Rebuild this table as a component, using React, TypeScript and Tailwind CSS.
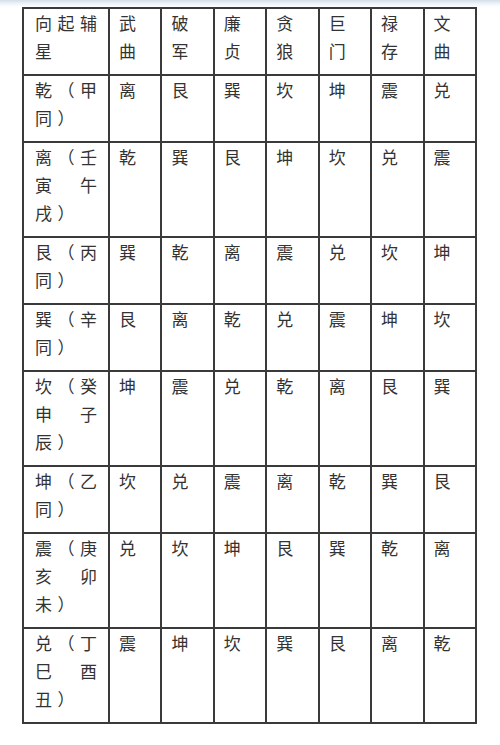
import React from 'react';

// 第一列每行分三格，空串表示该格留白
const rows: { head: string[][]; cells: string[] }[] = [
  { head: [['乾', '（', '甲'], ['同', '）', '']], cells: ['离', '艮', '巽', '坎', '坤', '震', '兑'] },
  { head: [['离', '（', '壬'], ['寅', '', '午'], ['戌', '）', '']], cells: ['乾', '巽', '艮', '坤', '坎', '兑', '震'] },
  { head: [['艮', '（', '丙'], ['同', '）', '']], cells: ['巽', '乾', '离', '震', '兑', '坎', '坤'] },
  { head: [['巽', '（', '辛'], ['同', '）', '']], cells: ['艮', '离', '乾', '兑', '震', '坤', '坎'] },
  { head: [['坎', '（', '癸'], ['申', '', '子'], ['辰', '）', '']], cells: ['坤', '震', '兑', '乾', '离', '艮', '巽'] },
  { head: [['坤', '（', '乙'], ['同', '）', '']], cells: ['坎', '兑', '震', '离', '乾', '巽', '艮'] },
  { head: [['震', '（', '庚'], ['亥', '', '卯'], ['未', '）', '']], cells: ['兑', '坎', '坤', '艮', '巽', '乾', '离'] },
  { head: [['兑', '（', '丁'], ['巳', '', '酉'], ['丑', '）', '']], cells: ['震', '坤', '坎', '巽', '艮', '离', '乾'] },
];

const stars = ['武曲', '破军', '廉贞', '贪狼', '巨门', '禄存', '文曲'];

const Lines: React.FC<{ lines: string[][] }> = ({ lines }) => (
  <div>
    {lines.map((line, i) => (
      <div key={i} className="flex justify-between h-[28px]">
        {line.map((ch, j) => (
          <span key={j} className="w-[17px]">{ch}</span>
        ))}
      </div>
    ))}
  </div>
);

const cellBase = 'border-2 border-[#3a3a3a] align-top pt-0 pb-[9px] leading-[28px]';

export default function App() {
  return (
    <div
      className="min-h-[745px] bg-white text-[17px] text-[#333]"
      style={{ fontFamily: '"Noto Sans CJK SC", "Noto Sans", sans-serif' }}
    >
      <div className="h-[7px] bg-linear-to-b from-[#d2deea] via-[#eef3f8] to-white" />
      <table className="ml-[22px] w-[455px] table-fixed border-collapse">
        <colgroup>
          <col className="w-[86px]" />
          {stars.map((s) => (
            <col key={s} />
          ))}
        </colgroup>
        <tbody>
          <tr>
            <td className={`${cellBase} pl-[11px] pr-[11px]`}>
              <Lines lines={[['向', '起', '辅'], ['星', '', '']]} />
            </td>
            {stars.map((s) => (
              <td key={s} className={`${cellBase} pl-[9px]`}>
                {s.split('').map((ch, i) => (
                  <div key={i}>{ch}</div>
                ))}
              </td>
            ))}
          </tr>
          {rows.map((row, i) => (
            <tr key={i}>
              <td className={`${cellBase} pl-[11px] pr-[11px]`}>
                <Lines lines={row.head} />
              </td>
              {row.cells.map((c, j) => (
                <td key={j} className={`${cellBase} pl-[9px]`}>
                  {c}
                </td>
              ))}
            </tr>
          ))}
        </tbody>
      </table>
    </div>
  );
}
